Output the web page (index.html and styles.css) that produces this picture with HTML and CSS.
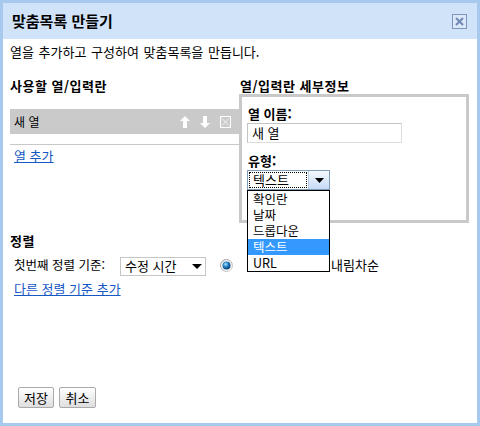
FILE: index.html
```html
<!DOCTYPE html>
<html lang="ko">
<head>
<meta charset="utf-8">
<link rel="stylesheet" href="styles.css">
</head>
<body>
<div class="dialog">
  <div class="titlebar">
    <span class="title">맞춤목록 만들기</span>
    <span class="close">
      <svg width="15" height="15" viewBox="0 0 15 15"><rect x="0.5" y="0.5" width="14" height="14" fill="#dbe8f8" stroke="#7d95bf"/><path d="M4 4 L11 11 M11 4 L4 11" stroke="#6f88b6" stroke-width="2"/></svg>
    </span>
  </div>
  <div class="content">
    <p class="intro">열을 추가하고 구성하여 맞춤목록을 만듭니다.</p>
    <div class="columns">
      <div class="left">
        <h3 class="heading">사용할 열/입력란</h3>
        <div class="colrow">
          <span class="colname">새 열</span>
          <span class="tools">
            <svg width="10" height="12" viewBox="0 0 10 12"><path d="M5 0 L10 5 L7 5 L7 12 L3 12 L3 5 L0 5 Z" fill="#fff"/></svg>
            <svg width="10" height="12" viewBox="0 0 10 12"><path d="M5 12 L10 7 L7 7 L7 0 L3 0 L3 7 L0 7 Z" fill="#fff"/></svg>
            <svg width="11" height="12" viewBox="0 0 11 12"><rect x="0.5" y="0.5" width="10" height="11" fill="none" stroke="#fff"/><path d="M2 2.5 L9 9.5 M9 2.5 L2 9.5" stroke="#fff" stroke-width="0.8"/></svg>
          </span>
        </div>
        <div class="sep"></div>
        <a class="link add-col" href="#">열 추가</a>
      </div>
      <div class="right">
        <h3 class="heading heading-right">열/입력란 세부정보</h3>
        <div class="detail">
          <div class="label">열 이름:</div>
          <div class="textinput">새 열</div>
          <div class="label label-type">유형:</div>
          <div class="selwrap">
            <div class="typesel">
              <span class="typeval"><span class="focus">텍스트</span></span>
              <span class="dropbtn"><svg width="9" height="5" viewBox="0 0 9 5"><path d="M0 0 L9 0 L4.5 5 Z" fill="#000"/></svg></span>
            </div>
            <ul class="menu">
              <li>확인란</li>
              <li>날짜</li>
              <li>드롭다운</li>
              <li class="sel">텍스트</li>
              <li>URL</li>
            </ul>
          </div>
        </div>
      </div>
    </div>
    <div class="sort">
      <h3 class="heading">정렬</h3>
      <div class="sortrow">
        <span class="sortlabel">첫번째 정렬 기준:</span>
        <span class="sortsel"><span>수정 시간</span><svg width="10" height="5" viewBox="0 0 10 5"><path d="M0 0 L10 0 L5 5 Z" fill="#000"/></svg></span>
        <span class="radio radio-asc">
          <svg width="13" height="13" viewBox="0 0 13 13"><defs><radialGradient id="rg" cx="0.4" cy="0.35" r="0.6"><stop offset="0" stop-color="#bfe6ff"/><stop offset="0.45" stop-color="#2f8fd0"/><stop offset="1" stop-color="#0a3f78"/></radialGradient><linearGradient id="rr" x1="0" y1="0" x2="1" y2="1"><stop offset="0" stop-color="#8a8a8a"/><stop offset="1" stop-color="#d8d8d8"/></linearGradient></defs><circle cx="6.5" cy="6.5" r="6" fill="#f4f4f4" stroke="url(#rr)"/><circle cx="6.5" cy="6.5" r="4" fill="url(#rg)"/></svg>
        </span>
        <span class="radiolabel asc">오름차순</span>
        <span class="radio radio-desc">
          <svg width="13" height="13" viewBox="0 0 13 13"><circle cx="6.5" cy="6.5" r="6" fill="#f4f4f4" stroke="#999"/></svg>
        </span>
        <span class="radiolabel desc">내림차순</span>
      </div>
      <a class="link add-sort" href="#">다른 정렬 기준 추가</a>
    </div>
    <div class="buttons">
      <button class="btn btn-save">저장</button>
      <button class="btn btn-cancel">취소</button>
    </div>
  </div>
</div>
</body>
</html>
```
FILE: styles.css
```css
html, body {
  margin: 0;
  padding: 0;
  background: #fff;
}
body {
  font-family: "Noto Sans CJK KR", "Liberation Sans", sans-serif;
  font-size: 13px;
  line-height: 16px;
  color: #000;
}
.dialog {
  width: 480px;
  height: 426px;
  box-sizing: border-box;
  border: 3px solid #a8c9ee;
  display: flex;
  flex-direction: column;
  background: #fff;
}
.titlebar {
  height: 36px;
  flex: none;
  background: #d0e3f8;
  display: flex;
  align-items: center;
  justify-content: space-between;
  padding: 0 10px 0 9px;
}
.title {
  font-size: 15px;
  font-weight: bold;
  line-height: 18px;
}
.close {
  display: flex;
  width: 15px;
  height: 15px;
  margin-top: 1px;
}
.content {
  flex: 1;
  display: flex;
  flex-direction: column;
  padding: 5px 8px 15px 7px;
}
.intro {
  margin: 0;
  line-height: 16px;
  word-spacing: 1px;
}
.columns {
  display: flex;
  margin-top: 18px;
}
.left {
  width: 229px;
  flex: none;
}
.right {
  width: 230px;
  flex: none;
}
.heading {
  margin: 0;
  font-size: 13px;
  font-weight: bold;
  line-height: 16px;
  letter-spacing: 0.5px;
}
.heading-right {
  padding-left: 1px;
}
.colrow {
  margin-top: 15px;
  height: 25px;
  background: #cacaca;
  display: flex;
  align-items: center;
  padding: 0 8px 0 4px;
}
.colname {
  font-size: 12px;
}
.tools {
  margin-left: auto;
  display: flex;
  align-items: center;
  gap: 10px;
}
.sep {
  margin-top: 10px;
  height: 1px;
  background: #c8c8c8;
}
.link {
  color: #1558c4;
  text-decoration: underline;
  display: inline-block;
}
.add-col {
  margin-top: 3px;
  margin-left: 4px;
}
.detail {
  height: 129px;
  box-sizing: border-box;
  border: 3px solid #c9c9c9;
  padding: 9px 0 0 5px;
}
.label {
  font-weight: bold;
  line-height: 16px;
  padding-left: 1px;
}
.textinput {
  margin-top: 1px;
  width: 155px;
  height: 20px;
  box-sizing: border-box;
  border: 1px solid #c4c4c4;
  border-right-color: #dcdcdc;
  border-bottom-color: #dcdcdc;
  padding-left: 4px;
  line-height: 18px;
}
.label-type {
  margin-top: 10px;
}
.selwrap {
  margin-top: 1px;
  position: relative;
  width: 83px;
  height: 20px;
}
.typesel {
  width: 83px;
  height: 20px;
  box-sizing: border-box;
  border: 1px solid #7f9db9;
  display: flex;
  background: #fff;
}
.typeval {
  flex: 1;
  display: flex;
  padding: 1px;
}
.focus {
  flex: 1;
  border: 1px dotted #000;
  line-height: 14px;
  padding-left: 3px;
}
.dropbtn {
  width: 20px;
  flex: none;
  display: flex;
  align-items: center;
  justify-content: center;
  background: linear-gradient(#f4f8fe, #c6dbf6);
  border-left: 1px solid #b7cbe6;
}
.menu {
  position: absolute;
  z-index: 10;
  top: 20px;
  left: 0;
  width: 83px;
  box-sizing: border-box;
  margin: 0;
  padding: 0;
  list-style: none;
  border: 1px solid #000;
  background: #fff;
  font-size: 12.5px;
}
.menu li {
  height: 16px;
  line-height: 16px;
  padding-left: 5px;
}
.menu li.sel {
  background: #3399ff;
  color: #fff;
}
.sort {
  margin-top: 10px;
}
.sortrow {
  margin-top: 6px;
  height: 20px;
  display: flex;
  align-items: center;
  padding-left: 4px;
}
.sortlabel {
  width: 101px;
  flex: none;
  font-size: 12.5px;
}
.sortsel {
  margin-left: 5px;
  width: 86px;
  height: 19px;
  flex: none;
  box-sizing: border-box;
  border: 1px solid #c6c6c6;
  display: flex;
  align-items: center;
  justify-content: space-between;
  padding: 0 3px 0 4px;
  margin-top: 2px;
}
.radio {
  display: flex;
  flex: none;
}
.radio-asc {
  margin-left: 14px;
}
.radiolabel {
  flex: none;
}
.asc {
  margin-left: 14px;
  width: 67px;
}
.desc {
  margin-left: 4px;
}
.add-sort {
  margin-top: 6px;
  margin-left: 4px;
}
.buttons {
  margin-top: auto;
  padding-left: 8px;
  display: flex;
  gap: 5px;
}
.btn {
  height: 21px;
  box-sizing: border-box;
  padding: 0;
  font-family: "Noto Sans CJK KR", sans-serif;
  font-size: 13px;
  line-height: 18px;
  border: 1px solid #aaaaaa;
  border-radius: 2px;
  background: linear-gradient(#ffffff, #dedede);
  color: #000;
}
.btn-save {
  width: 36px;
}
.btn-cancel {
  width: 37px;
}
```
